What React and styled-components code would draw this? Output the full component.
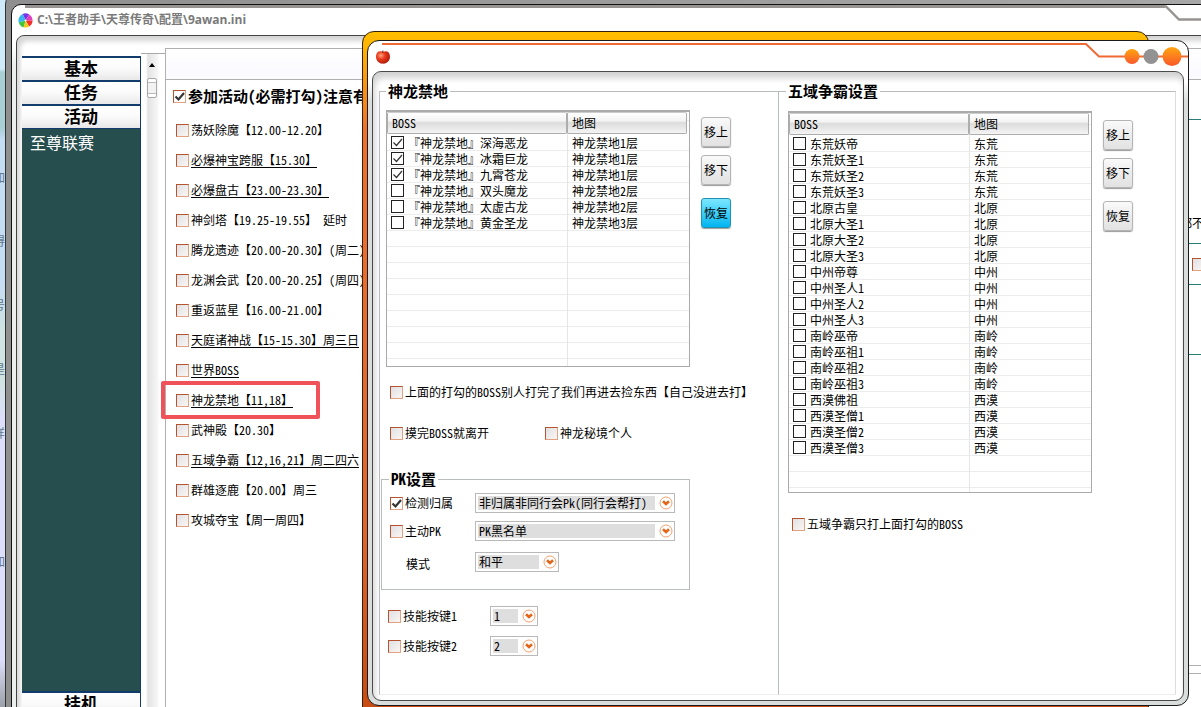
import styled, { createGlobalStyle, css } from 'styled-components';

const GlobalStyle = createGlobalStyle`
  * {
    box-sizing: border-box;
  }

  html,
  body,
  #root {
    height: 100%;
    margin: 0;
  }

  body {
    overflow: hidden;
    font: 12px/16px 'Noto Sans CJK SC', sans-serif;
    font-feature-settings: 'hwid';
    color: #000;
  }

  button,
  select,
  input {
    margin: 0;
    font: inherit;
    font-feature-settings: inherit;
    color: inherit;
  }
`;

/* ---------- desktop ---------- */

const Desktop = styled.div`
  position: relative;
  height: 100vh;
  overflow: hidden;
  background: linear-gradient(
    #cfeafa 0 69px,
    #a9cfd4 72px 128px,
    #c5dcf5 140px 280px,
    #cfe3e2 330px 380px,
    #dcdffa 420px 660px,
    #9aa0a8 100%
  );
`;

const DesktopText = styled.div`
  display: flex;
  flex-direction: column;
  gap: 48px;
  width: 5px;
  padding-top: 169px;
  overflow: hidden;
  color: #60788c;
  direction: rtl;

  span:last-child {
    margin-top: 64px;
  }
`;

/* ---------- shared controls ---------- */

const Check = styled.input.attrs({ type: 'checkbox' })`
  appearance: none;
  flex: none;
  width: 13px;
  height: 13px;
  border: 1px solid ${p => (p.$plain ? '#222' : '#b5532f')};
  background: ${p =>
    p.$plain ? '#fff' : 'linear-gradient(135deg, #dfe0e4, #fbf6f2)'};

  ${p =>
    !p.$plain &&
    css`
      border-right-color: #e2a183;
      border-bottom-color: #e2a183;
    `}

  &:checked {
    background: url("data:image/svg+xml,%3Csvg xmlns='http://www.w3.org/2000/svg' viewBox='0 0 11 11'%3E%3Cpath d='M1.5 5.5 L4.5 8.5 L10 2' fill='none' stroke='%23333' stroke-width='${p =>
      p.$plain ? '1.2' : '2.2'}'/%3E%3C/svg%3E")
      center / 11px 11px no-repeat;
  }
`;

const CheckLabel = styled.label`
  display: flex;
  align-items: center;
  gap: 2px;
  height: 16px;
  white-space: nowrap;
  text-decoration: ${p => (p.$underline ? 'underline' : 'none')};
  text-underline-offset: 2px;
`;

const SelectBox = styled.div`
  position: relative;
  display: flex;
  width: ${p => p.$width}px;
  height: 20px;
  padding: 2px;
  border: 1px solid #b9b9b9;
  background: #fff;

  select {
    appearance: none;
    flex: 1;
    min-width: 0;
    margin-right: 17px;
    padding: 0 1px;
    border: none;
    outline: none;
    background: #dedede;
    line-height: 14px;
  }

  svg {
    position: absolute;
    right: 1px;
    top: 2px;
    pointer-events: none;
  }
`;

const Select = ({ value, width, label }) => (
  <SelectBox $width={width}>
    <select aria-label={label} defaultValue={value}>
      <option>{value}</option>
    </select>
    <svg width="14" height="14" viewBox="0 0 14 14">
      <circle cx="7" cy="7" r="6" fill="#fff" stroke="#f0a070" />
      <path
        d="M4 5.2 L7 8 L10 5.2"
        fill="none"
        stroke="#e2661a"
        strokeWidth="2.6"
      />
    </svg>
  </SelectBox>
);

/* ---------- main window ---------- */

const MainWindow = styled.section`
  position: absolute;
  inset: -6px -20px -20px 5px;
  padding: 9px 0 0 5px;
  border: 1px solid #333;
  border-radius: 10px;
  background: linear-gradient(90deg, #8f8f8f, #a8a8a8);
`;

const MainFrame = styled.div`
  display: flex;
  flex-direction: column;
  height: 100%;
  padding-left: 4px;
  border: 1px solid #111;
  border-radius: 10px;
  background: linear-gradient(#fff 40px, #eceeee 60px);
`;

const TitleBar = styled.header`
  display: flex;
  align-items: center;
  gap: 4px;
  height: 30px;
  padding-left: 2px;
  color: #7a7a7a;
  font-family: 'Open Sans', 'Noto Sans CJK SC', sans-serif;
  font-weight: 700;
`;

const TitleLine = styled.svg`
  position: absolute;
  top: 10px;
  right: 19px;
`;

const TitleRule = styled.div`
  position: absolute;
  top: 10px;
  left: 19px;
  right: 55px;
  height: 3px;
  background: #979393;
`;

const MainPanel = styled.div`
  flex: 1;
  display: flex;
  padding: 0 0 0 5px;
  border: 1px solid #444;
  border-radius: 8px;
  background: #fff;
  box-shadow: inset 3px 5px 5px #d4d4d4;
`;

const Sidebar = styled.nav`
  display: flex;
  flex-direction: column;
  width: 119px;
  margin-top: 20px;
  border-right: 1px solid #123c6b;
  background: #264e4e;
`;

const SideButton = styled.button`
  flex: none;
  height: 24px;
  padding: 0 0 2px;
  border: none;
  border-top: 2px solid #123c6b;
  background: linear-gradient(#fff, #fafafa 50%, #e8e8e8);
  font-size: 17px;
  font-weight: 700;
  line-height: 20px;
`;

const SideItems = styled.div`
  flex: none;
  height: 563px;
  padding: 2px 8px;
  border-top: 1px solid #123c6b;
  color: #fff;
  font-size: 16px;
  line-height: 22px;
`;

const ScrollTrack = styled.div`
  display: flex;
  flex-direction: column;
  align-items: center;
  width: 24px;
  margin-top: 17px;
  padding: 9px 7px 0 5px;
  border-top: 1px solid #a9a9a9;
  background: linear-gradient(90deg, #fff 5px, #e3e3e3 7px, #f7f7f7 17px, #fff 18px);
`;

const ScrollThumb = styled.div`
  width: 10px;
  height: 20px;
  margin-top: 11px;
  border: 1px solid #a8a8a8;
  border-radius: 2px;
  background: linear-gradient(
    #fff 0 3px,
    #bbb 3px 4px,
    #f2f2f2 4px 14px,
    #bbb 14px 15px,
    #fff 15px
  );
`;

const Content = styled.main`
  flex: 1;
  display: grid;
  grid-template: 31px 1fr / 1fr 38px;
  margin-top: 12px;
  border: 1px solid #b0b0b0;
  border-width: 1px 0 0 1px;
`;

const ContentTop = styled.div`
  grid-column: 1 / -1;
  border-bottom: 1px solid #b0b0b0;
  background: linear-gradient(#fff, #fafaff);
`;

const Activities = styled.div`
  padding: 7px;
`;

const ActivityHead = styled(CheckLabel)`
  height: 18px;
  margin-bottom: 17px;
  font-size: 15px;
  font-weight: 700;
`;

const ActivityList = styled.ul`
  display: flex;
  flex-direction: column;
  gap: 14px;
  margin: 0;
  padding: 0 0 0 3px;
  list-style: none;
`;

const Activity = styled.li`
  position: relative;
`;

const Highlight = styled.div`
  position: absolute;
  top: -11px;
  left: -15px;
  width: 159px;
  height: 38px;
  border: 4px solid #f0525a;
  border-radius: 2px;
`;

const SideSections = styled.div`
  display: flex;
  flex-direction: column;
`;

const SideSection = styled.div`
  display: flex;
  align-items: end;
  flex: none;
  height: ${p => p.$height}px;
  padding: ${p => p.$pad};
  border-bottom: 1px solid ${p => p.$color || '#2b7d78'};
  white-space: nowrap;
`;

/* ---------- dialog ---------- */

const DialogBack = styled.div`
  position: absolute;
  top: 31px;
  left: 362px;
  right: 52px;
  bottom: -10px;
  border: 1px solid #33210a;
  border-radius: 12px 12px 0 0;
  background: linear-gradient(
    #ffbf00,
    #ffb000 20px,
    #f0702c 100px,
    #e0642c 500px,
    #c84a10
  );
`;

const Dialog = styled.section`
  position: absolute;
  top: 40px;
  left: 367px;
  right: 12px;
  bottom: 1px;
  display: flex;
  flex-direction: column;
  padding: 0 4px 4px;
  border: 1px solid #1a1a1a;
  border-radius: 12px;
  background: linear-gradient(#fff 40px, #d9dedd 60px);
`;

const DialogTitle = styled.header`
  display: flex;
  justify-content: space-between;
  height: 30px;
  padding: 8px 0 0 3px;
`;

const DialogRule = styled.div`
  position: absolute;
  top: 2px;
  left: 14px;
  right: 102px;
  height: 2px;
  background: #f06a35;
`;

const WindowButtons = styled.svg`
  position: absolute;
  top: 2px;
  right: 0;
`;

const DialogPanel = styled.div`
  flex: 1;
  display: flex;
  padding: 10px 7px 5px 6px;
  border: 1px solid #4a4a4a;
  border-radius: 9px;
  background: #fff;
  box-shadow: inset 2px 6px 6px #d2d2d2;
`;

const Group = styled.fieldset`
  flex: ${p => p.$grow || 'none'};
  width: ${p => (p.$width ? p.$width + 'px' : 'auto')};
  min-width: 0;
  margin: 0;
  padding: ${p => p.$pad};
  border: 1px solid #b8bcbc;
  ${p => p.$open && 'border-bottom-color: #eee;'}
`;

const RightGroup = styled(Group)`
  border-left: none;
  border-right-color: #ddd;
`;

const Legend = styled.legend`
  margin-left: ${p => p.$indent}px;
  padding: 0 2px;
  font-size: 15px;
  font-weight: 700;
  line-height: 18px;
`;

const ListRow = styled.div`
  display: flex;
  gap: 11px;
  padding-left: 5px;
`;

const ListFrame = styled.div`
  width: 304px;
  height: ${p => p.$height}px;
  border: 1px solid #aaa;
  border-top-width: 2px;
  background: linear-gradient(#e6e6e6, #e6e6e6) 180px 0 / 1px 100% no-repeat,
    repeating-linear-gradient(#fff 0 15px, #ececec 15px 16px) 0 23px;
`;

const Table = styled.table`
  width: 300px;
  border-collapse: separate;
  border-spacing: 0;
  table-layout: fixed;

  th {
    height: 22px;
    padding: 0 4px;
    border: 1px solid #adadad;
    border-top-color: #ccc;
    border-radius: 2px;
    background: linear-gradient(#fff, #f3f3f3 40%, #dcdcdc 48%, #f4f4f4);
    font-weight: 400;
    text-align: left;
  }

  th:first-child {
    width: 180px;
  }

  td {
    height: 16px;
    padding: 0 5px;
    line-height: 15px;
    white-space: nowrap;
  }

  td:first-child {
    padding: 0 4px;
  }
`;

const RowLabel = styled.label`
  display: flex;
  align-items: center;
  gap: 4px;
  height: 16px;
`;

const ButtonColumn = styled.div`
  display: flex;
  flex-direction: column;
  gap: 8px;
  padding-top: ${p => p.$top}px;
`;

const ToolButton = styled.button`
  width: 30px;
  height: 30px;
  padding: 0;
  border: 1px solid ${p => (p.$active ? '#2492ae' : '#b4b4b4')};
  border-radius: 3px;
  background: ${p =>
    p.$active
      ? 'linear-gradient(#7be6ff, #3fd0f8 50%, #00b4f0)'
      : 'linear-gradient(#fafafa, #ececec 50%, #e2e2e2)'};
  box-shadow: 0 1px 1px #999;

  &:last-child {
    margin-top: 5px;
  }
`;

const OptionRow = styled.div`
  display: grid;
  grid-template-columns: ${p => p.$cols};
  align-items: center;
  height: ${p => p.$height || 30}px;
`;

const Options = styled.div`
  padding: ${p => p.$pad};
`;

const ModeLabel = styled.span`
  padding: 3px 0 0 16px;
`;

const activities = [
  ['荡妖除魔【12.00-12.20】'],
  ['必爆神宝跨服【15.30】', true],
  ['必爆盘古【23.00-23.30】', true],
  ['神剑塔【19.25-19.55】 延时'],
  ['腾龙遗迹【20.00-20.30】(周二)'],
  ['龙渊会武【20.00-20.25】(周四)'],
  ['重返蓝星【16.00-21.00】'],
  ['天庭诸神战【15-15.30】周三日', true],
  ['世界BOSS', true],
  ['神龙禁地【11,18】', true, true],
  ['武神殿【20.30】'],
  ['五域争霸【12,16,21】周二四六', true],
  ['群雄逐鹿【20.00】周三'],
  ['攻城夺宝【周一周四】'],
];

const dragons = [
  ['『神龙禁地』深海恶龙', '神龙禁地1层', true],
  ['『神龙禁地』冰霜巨龙', '神龙禁地1层', true],
  ['『神龙禁地』九霄苍龙', '神龙禁地1层', true],
  ['『神龙禁地』双头魔龙', '神龙禁地2层'],
  ['『神龙禁地』太虚古龙', '神龙禁地2层'],
  ['『神龙禁地』黄金圣龙', '神龙禁地3层'],
];

const regions = [
  ['东荒', ['妖帝', '妖圣1', '妖圣2', '妖圣3']],
  ['北原', ['古皇', '大圣1', '大圣2', '大圣3']],
  ['中州', ['帝尊', '圣人1', '圣人2', '圣人3']],
  ['南岭', ['巫帝', '巫祖1', '巫祖2', '巫祖3']],
  ['西漠', ['佛祖', '圣僧1', '圣僧2', '圣僧3']],
].flatMap(([map, names]) => names.map(name => [map + name, map]));

const BossList = ({ rows, height }) => (
  <ListFrame $height={height}>
    <Table>
      <thead>
        <tr>
          <th>BOSS</th>
          <th>地图</th>
        </tr>
      </thead>
      <tbody>
        {rows.map(([name, map, checked]) => (
          <tr key={name}>
            <td>
              <RowLabel>
                <Check $plain defaultChecked={checked} />
                {name}
              </RowLabel>
            </td>
            <td>{map}</td>
          </tr>
        ))}
      </tbody>
    </Table>
  </ListFrame>
);

const Option = ({ children, checked, underline }) => (
  <CheckLabel $underline={underline}>
    <Check defaultChecked={checked} />
    <span>{children}</span>
  </CheckLabel>
);

const Pinwheel = () => (
  <svg width="15" height="15" viewBox="0 0 16 16">
    <path d="M8 8 L5 1 A7.5 7.5 0 0 1 12 1.6 Z" fill="#7a35e8" />
    <path d="M8 8 L12 1.6 A7.5 7.5 0 0 1 15.5 8 Z" fill="#e03fc0" />
    <path d="M8 8 L15.5 8 A7.5 7.5 0 0 1 12 14.4 Z" fill="#f0302a" />
    <path d="M8 8 L12 14.4 A7.5 7.5 0 0 1 6 15.2 Z" fill="#f8c81c" />
    <path d="M8 8 L6 15.2 A7.5 7.5 0 0 1 .8 10 Z" fill="#3fc43a" />
    <path d="M8 8 L.8 10 A7.5 7.5 0 0 1 5 1 Z" fill="#38b4f0" />
    <circle cx="8" cy="8" r="1" fill="#fff" />
  </svg>
);

const Apple = () => (
  <svg width="16" height="16" viewBox="0 0 16 16">
    <defs>
      <radialGradient id="apple" cx=".35" cy=".35" r=".75">
        <stop offset="0" stopColor="#ffa880" />
        <stop offset=".4" stopColor="#e83a1c" />
        <stop offset="1" stopColor="#a81808" />
      </radialGradient>
    </defs>
    <path
      d="M8 3 C5 1 1 2.5 1 7.5 C1 11.5 4 15 8 14.6 C12 15 15 11.5 15 7.5 C15 2.5 11 1 8 3Z"
      fill="url(#apple)"
    />
    <path d="M7.6 3.6 L8 1.6" stroke="#5c2a10" strokeWidth="1.2" />
  </svg>
);

export default function App() {
  return (
    <Desktop>
      <GlobalStyle />
      <DesktopText>
        <span>加</span>
        <span>得</span>
        <span>号</span>
        <span>是</span>
        <span>样</span>
        <span>加</span>
      </DesktopText>

      <MainWindow>
        <TitleRule />
        <TitleLine width="36" height="17" viewBox="0 0 36 17">
          <path
            d="M0 1.5 H1 L14 14.5 H36"
            fill="none"
            stroke="#979393"
            strokeWidth="2.4"
          />
        </TitleLine>
        <MainFrame>
          <TitleBar>
            <Pinwheel />
            <span>C:\王者助手\天尊传奇\配置\9awan.ini</span>
          </TitleBar>
          <MainPanel>
            <Sidebar>
              <SideButton>基本</SideButton>
              <SideButton>任务</SideButton>
              <SideButton>活动</SideButton>
              <SideItems>至尊联赛</SideItems>
              <SideButton>挂机</SideButton>
            </Sidebar>
            <ScrollTrack>
              <svg width="6" height="4" viewBox="0 0 6 4">
                <path d="M0 4 L3 0 L6 4Z" />
              </svg>
              <ScrollThumb />
            </ScrollTrack>
            <Content>
              <ContentTop />
              <Activities>
                <ActivityHead>
                  <Check defaultChecked />
                  参加活动(必需打勾)注意有
                </ActivityHead>
                <ActivityList>
                  {activities.map(([name, underline, marked]) => (
                    <Activity key={name}>
                      <Option underline={underline}>{name}</Option>
                      {marked && <Highlight />}
                    </Activity>
                  ))}
                </ActivityList>
              </Activities>
              <SideSections>
                <SideSection $height={40} />
                <SideSection $height={124} $pad="0 0 12px 0">
                  都不
                </SideSection>
                <SideSection $height={41} $pad="0 0 13px 12px">
                  <Check aria-label="启用" />
                </SideSection>
                <SideSection $height={70} />
                <SideSection $height={311} $color="#b0b0b0" />
                <SideSection $height={8} $color="#b0b0b0" />
              </SideSections>
            </Content>
          </MainPanel>
        </MainFrame>
      </MainWindow>

      <DialogBack />
      <Dialog>
        <DialogRule />
        <WindowButtons width="103" height="26" viewBox="0 0 103 26">
          <defs>
            <linearGradient id="orb" x2="0" y2="1">
              <stop offset="0" stopColor="#ffa510" />
              <stop offset="1" stopColor="#f8582c" />
            </linearGradient>
          </defs>
          <path
            d="M0 1 H1 L14 13.5 H103"
            fill="none"
            stroke="#f06a35"
            strokeWidth="2"
          />
          <circle cx="47" cy="13.5" r="7.5" fill="url(#orb)" />
          <circle cx="66" cy="13.5" r="7.5" fill="#929292" />
          <circle cx="87" cy="13.5" r="9.5" fill="url(#orb)" />
        </WindowButtons>
        <DialogTitle>
          <Apple />
        </DialogTitle>
        <DialogPanel>
          <Group $width={400} $pad="10px 1px 0" $open>
            <Legend $indent={5}>神龙禁地</Legend>
            <ListRow>
              <BossList rows={dragons} height={257} />
              <ButtonColumn $top={7}>
                <ToolButton>移上</ToolButton>
                <ToolButton>移下</ToolButton>
                <ToolButton $active>恢复</ToolButton>
              </ButtonColumn>
            </ListRow>
            <Options $pad="9px 9px 12px">
              <OptionRow $cols="1fr" $height={32}>
                <Option>
                  上面的打勾的BOSS别人打完了我们再进去捡东西【自己没进去打】
                </Option>
              </OptionRow>
              <OptionRow $cols="155px 1fr" $height={50}>
                <Option>摸完BOSS就离开</Option>
                <Option>神龙秘境个人</Option>
              </OptionRow>
            </Options>
            <Group $width={309} $pad="1px 8px 10px">
              <Legend $indent={-1}>PK设置</Legend>
              <OptionRow $cols="85px 1fr" $height={28}>
                <Option checked>检测归属</Option>
                <Select
                  label="检测归属"
                  width={200}
                  value="非归属非同行会Pk(同行会帮打)"
                />
              </OptionRow>
              <OptionRow $cols="85px 1fr" $height={28}>
                <Option>主动PK</Option>
                <Select label="主动PK" width={200} value="PK黑名单" />
              </OptionRow>
              <OptionRow $cols="85px 1fr" $height={34}>
                <ModeLabel>模式</ModeLabel>
                <Select label="模式" width={84} value="和平" />
              </OptionRow>
            </Group>
            <Options $pad="11px 7px">
              <OptionRow $cols="102px 1fr">
                <Option>技能按键1</Option>
                <Select label="技能按键1" width={48} value="1" />
              </OptionRow>
              <OptionRow $cols="102px 1fr">
                <Option>技能按键2</Option>
                <Select label="技能按键2" width={48} value="2" />
              </OptionRow>
            </Options>
          </Group>
          <RightGroup $grow="1" $pad="11px 4px 0" $open>
            <Legend $indent={3}>五域争霸设置</Legend>
            <ListRow>
              <BossList rows={regions} height={382} />
              <ButtonColumn $top={9}>
                <ToolButton>移上</ToolButton>
                <ToolButton>移下</ToolButton>
                <ToolButton>恢复</ToolButton>
              </ButtonColumn>
            </ListRow>
            <Options $pad="16px 9px">
              <OptionRow $cols="1fr">
                <Option>五域争霸只打上面打勾的BOSS</Option>
              </OptionRow>
            </Options>
          </RightGroup>
        </DialogPanel>
      </Dialog>
    </Desktop>
  );
}
